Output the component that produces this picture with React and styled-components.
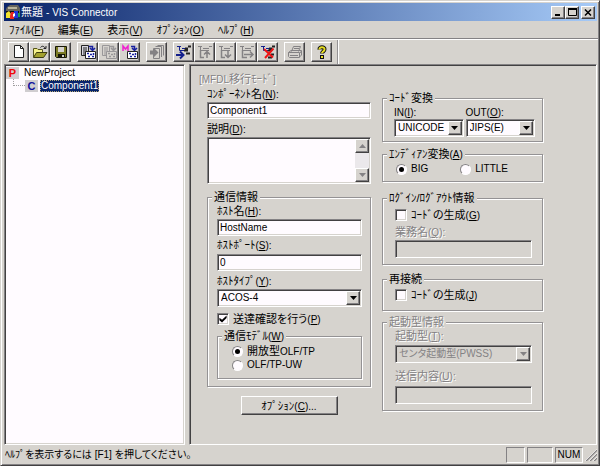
import React from "react";
import styled, { createGlobalStyle, css } from "styled-components";

const face = "#d6d3ce";
const paper = "#fffbff";
const shade = "#848284";
const dark = "#424142";
const navy = "#08246b";

const sunken = css`
  border: 1px solid;
  border-color: ${shade} #fff #fff ${shade};
  box-shadow: inset 1px 1px ${dark}, inset -1px -1px ${face};
`;

const raised = css`
  background: ${face};
  border: 1px solid;
  border-color: #fff ${dark} ${dark} #fff;
  box-shadow: inset -1px -1px ${shade};
`;

const GlobalStyle = createGlobalStyle`
  * { box-sizing: border-box; }
  body { margin: 0; background: ${face}; }
  body, button, input, select, textarea {
    font-family: "Liberation Sans", "Noto Sans CJK JP", sans-serif;
    font-size: 11px;
    line-height: 14px;
    color: #000;
  }
  body { font-feature-settings: "palt"; }
`;

const Window = styled.div`
  min-height: 100vh;
  display: flex;
  flex-direction: column;
  background: ${face};
  padding: 1px 1px 2px 2px;
  border: 1px solid;
  border-color: ${face} ${dark} ${dark} ${face};
  box-shadow: inset 1px 1px #fff, inset -1px -1px ${shade};
  white-space: nowrap;
`;

const TitleBar = styled.header`
  height: 18px;
  margin: 1px 1px 0;
  padding: 0 2px 0 1px;
  display: flex;
  align-items: center;
  color: #fff;
  background: linear-gradient(to right, #0a246a, #a6caf7);
`;

const Title = styled.h1`
  margin: 0;
  flex: 1;
  font-size: 11px;
  font-weight: normal;
`;

const Latin = styled.span`
  font-size: 10px;
  line-height: 10px;
`;

const CaptionButton = styled.button`
  ${raised}
  width: 14px;
  height: 13px;
  padding: 0;
  display: grid;
  place-items: center;
  margin-left: ${(p) => (p.$apart ? "2px" : "0")};
`;

const MenuBar = styled.nav`
  height: 17px;
  display: flex;
  align-items: center;
  padding: 0 6px;
  gap: 14px;
`;

const MenuItem = styled.button`
  border: 0;
  padding: 0;
  background: none;
  font-feature-settings: "palt";
`;

const Toolbar = styled.div`
  display: flex;
  height: 26px;
  padding-top: 1px;
  border-top: 1px solid ${shade};
  box-shadow: inset 0 1px #fff;
`;

const ToolBand = styled.div`
  display: flex;
  align-items: center;
  gap: 6px;
  padding: 0 5px;
  border-right: 1px solid #949294;
  box-shadow: 1px 0 #fff;
`;

const ToolGroup = styled.div`
  display: flex;
`;

const ToolButton = styled.button`
  ${raised}
  width: 21px;
  height: 20px;
  padding: 0;
  display: grid;
  place-items: center;
`;

const Work = styled.main`
  flex: 1;
  display: flex;
  gap: 4px;
  margin-right: 1px;
`;

const Tree = styled.ul`
  ${sunken}
  flex: 0 0 181px;
  margin: 0 0 0 1px;
  padding: 1px;
  list-style: none;
  background: ${paper};
`;

const TreeItem = styled.li`
  display: flex;
  align-items: center;
  gap: 5px;
  height: 13px;
  padding-left: ${(p) => (p.$child ? "7px" : "0")};
`;

const Branch = styled.span`
  align-self: flex-start;
  width: 12px;
  height: 7px;
  margin-right: -5px;
  border: dotted #a09ea0;
  border-width: 0 0 1px 1px;
`;

const Badge = styled.span`
  width: 13px;
  height: 12px;
  background: #d0cdd0;
  color: ${(p) => p.$color};
  font: bold 11px/12px "Liberation Sans", sans-serif;
  text-align: center;
`;

const NodeName = styled.span`
  line-height: 12px;
  font-size: 10px;
  ${(p) =>
    p.$selected &&
    css`
      background: ${navy};
      color: #fff;
      outline: 1px dotted #b8a878;
      outline-offset: -1px;
      margin-left: -3px;
      padding: 0 1px;
    `}
`;

const Pane = styled.section`
  ${sunken}
  flex: 1;
  min-width: 0;
  padding: 7px 9px 4px;
`;

const Mode = styled.p`
  margin: 0 0 1px;
  color: ${shade};
  text-shadow: 1px 1px #fff;
`;

const Form = styled.form`
  display: grid;
  grid-template-columns: minmax(0, 164px) minmax(0, 161px);
  gap: 11px;
  padding-left: 8px;
`;

const Column = styled.div`
  display: flex;
  flex-direction: column;
  padding-top: ${(p) => p.$top || 0}px;
`;

const Group = styled.fieldset`
  min-width: 0;
  margin: ${(p) => p.$gap || 0}px 0 0;
  padding: 0;
  border: 1px solid #949294;
  box-shadow: inset 1px 1px #fff, 1px 1px #fff;
`;

const Legend = styled.legend`
  margin-left: 4px;
  padding: 0 2px;
  background: ${face};
  ${(p) => p.$off && `color: ${shade}; text-shadow: 1px 1px #fff;`}
`;

const GroupBody = styled.div`
  display: flex;
  flex-direction: column;
  padding: ${(p) => p.$pad};
`;

const Row = styled.div`
  display: flex;
  gap: ${(p) => p.$gap}px;
`;

const Field = styled.div`
  flex: 1;
  min-width: 0;
`;

const Label = styled.label`
  display: block;
  margin-top: ${(p) => p.$gap || 0}px;
  ${(p) => p.$off && `color: ${shade}; text-shadow: 1px 1px #fff;`}
`;

const TextBox = styled.input`
  ${sunken}
  display: block;
  width: 100%;
  height: ${(p) => p.$h || 17}px;
  margin-top: ${(p) => p.$gap || 0}px;
  padding: 0 2px;
  border-radius: 0;
  background: ${(p) => (p.disabled ? face : paper)};
  font-size: 10px;
`;

const Memo = styled.div`
  ${sunken}
  display: flex;
  height: 47px;
  margin-top: 1px;
  padding: 1px;
  background: ${paper};
`;

const MemoText = styled.textarea`
  flex: 1;
  min-width: 0;
  border: 0;
  padding: 1px;
  resize: none;
  overflow: hidden;
  background: transparent;
`;

const ScrollTrack = styled.div`
  width: 14px;
  display: flex;
  flex-direction: column;
  justify-content: space-between;
  background: #ebe8eb;
`;

const ScrollButton = styled.button`
  ${raised}
  height: 14px;
  padding: 0;
  display: grid;
  place-items: center;
`;

const Combo = styled.div`
  ${sunken}
  position: relative;
  flex: 1;
  height: 18px;
  margin-top: ${(p) => p.$gap || 0}px;
  padding: 1px;
  background: ${(p) => (p.$off ? face : paper)};
`;

const ComboSelect = styled.select`
  appearance: none;
  display: block;
  width: 100%;
  height: 14px;
  border: 0;
  padding: 0 14px 0 2px;
  background: transparent;
  font-size: 10px;
  font-feature-settings: "palt";
  color: ${(p) => (p.disabled ? shade : "#000")};
  opacity: 1;
`;

const ComboArrow = styled.span`
  ${raised}
  position: absolute;
  top: 1px;
  right: 1px;
  bottom: 1px;
  width: 14px;
  display: grid;
  place-items: center;
  pointer-events: none;
`;

const Choice = styled.label`
  display: flex;
  align-items: center;
  gap: 4px;
  height: 14px;
  margin-top: ${(p) => p.$gap || 0}px;
`;

const CheckBox = styled.input.attrs({ type: "checkbox" })`
  ${sunken}
  appearance: none;
  width: 12px;
  height: 12px;
  margin: 0;
  background: ${paper};
  display: grid;
  place-items: center;
  &:checked::before {
    content: "";
    width: 8px;
    height: 8px;
    background: #000;
    clip-path: polygon(5% 35%, 38% 60%, 95% 5%, 95% 38%, 38% 95%, 5% 65%);
  }
`;

const Radio = styled.input.attrs({ type: "radio" })`
  appearance: none;
  width: 11px;
  height: 11px;
  margin: 0;
  border: 1px solid;
  border-color: ${shade} #fff #fff ${shade};
  border-radius: 50%;
  background: ${paper};
  display: grid;
  place-items: center;
  &:checked::before {
    content: "";
    width: 5px;
    height: 5px;
    border-radius: 50%;
    background: #000;
  }
`;

const PushButton = styled.button`
  ${raised}
  align-self: center;
  width: 97px;
  height: 19px;
  margin-top: 9px;
  padding: 0;
`;

const StatusBar = styled.footer`
  display: flex;
  align-items: center;
  gap: 2px;
  height: 18px;
  padding: 1px 1px 0 2px;
`;

const StatusText = styled.span`
  flex: 1;
  font-size: 10px;
`;

const StatusCell = styled.span`
  width: ${(p) => p.$w}px;
  height: 16px;
  border: 1px solid;
  border-color: ${shade} #fff #fff ${shade};
  font-size: 10px;
  text-align: center;
`;

const Arrow = ({ up, off }) => (
  <svg width="7" height="4" viewBox="0 0 7 4" aria-hidden="true">
    <path d={up ? "M0 4L3.5 0L7 4Z" : "M0 0L3.5 4L7 0Z"} fill={off ? shade : "#000"} />
  </svg>
);

const Icon = ({ children }) => (
  <svg width="16" height="16" viewBox="0 0 16 16" fill="none" aria-hidden="true">
    {children}
  </svg>
);

const PageIcon = () => (
  <Icon>
    <path d="M3.5 1.5H9.5L12.5 4.5V13.5H3.5Z" fill="#fff" stroke="#222" />
    <path d="M9.5 1.5V4.5H12.5" stroke="#222" />
  </Icon>
);

const OpenIcon = () => (
  <Icon>
    <path d="M1.5 13V4.5H5L6 5.5H10.5V8" fill="#f5f18a" stroke="#55541c" />
    <path d="M1.5 13.5L4.5 8.5H15L11.5 13.5Z" fill="#a3a12e" stroke="#3c3b10" />
    <path d="M8.5 3.5C10 1.5 12 2 13.5 4.5M11.5 4.5H14V2" stroke="#222" />
  </Icon>
);

const SaveIcon = () => (
  <Icon>
    <path d="M2.5 2.5H13.5V13.5H3.5L2.5 12.5Z" fill="#7c7b24" stroke="#161606" />
    <path d="M5 3H11V8H5Z" fill={face} />
    <path d="M5 10H12V13H5Z" fill="#161606" />
    <path d="M9 11H11V13H9Z" fill={face} />
  </Icon>
);

const TransferIcon = ({ off, letter }) => {
  const ink = off ? "#999799" : "#222";
  const blue = off ? "#999799" : "#1820a0";
  return (
    <Icon>
      {letter ? (
        <path d="M1 7V2L3.5 5L6 2V7" stroke="#f020d0" strokeWidth="1.5" />
      ) : (
        <>
          <path d="M1.5 1.5H8.5V11.5H1.5Z" fill={off ? face : "#d8d8e0"} stroke={ink} />
          <path d="M3 4H7M3 6H7M3 8H6M3 10H5" stroke={ink} />
        </>
      )}
      <path d="M9 2.5H12.5V5M10 4L12.5 6.5L15 4" stroke={blue} strokeWidth="1.5" />
      <path d="M5.5 7.5H15.5V14.5H5.5Z" fill={off ? face : "#fff"} stroke={ink} />
      <path d="M7 9.5H9M10 10.5H12M12 12.5H14M8 12.5H10M13.5 9V11" stroke={blue} strokeWidth="1.5" />
    </Icon>
  );
};

const CopyIcon = () => (
  <Icon>
    <path d="M6.5 2.5H12.5V13M8.5 1.5H14.5V11.5M4.5 4.5H10.5V14.5H4.5Z" stroke={shade} />
    <path d="M1 6.5H5V4L9.5 8.5L5 13V10.5H1Z" fill={shade} />
  </Icon>
);

const treeArrows = {
  up: "M3.5 6V13.5H7M10 14V8M7 10.5L10 7.5L13 10.5",
  down: "M3.5 6V13.5H7M10 7V13M7 10.5L10 13.5L13 10.5",
  right: "M3.5 6V13.5H8M5 10.5H13.5M11 7.5L14 10.5L11 13.5",
};

const TreeIcon = ({ kind }) => {
  const off = kind in treeArrows;
  const c = off ? shade : "#14208c";
  return (
    <Icon>
      <path d="M1 2.5H5M3.5 3V6.5H8M6 4.5H10" stroke={c} />
      <path d="M9 4.5H12M8 6.5H12M12 2.5H15" stroke={off ? c : "#222"} strokeWidth={off ? 1 : 2} />
      {off && <path d={treeArrows[kind]} stroke={c} strokeWidth="1.5" />}
      {kind === "add" && (
        <>
          <path d="M0 11H7M4 7.5L7.5 11L4 14.5" stroke={c} strokeWidth="2" />
          <path d="M10 9.5H14" stroke="#222" strokeWidth="2" />
        </>
      )}
      {kind === "delete" && (
        <>
          <path d="M11 10.5H14M8 13.5H12" stroke="#222" strokeWidth="2" />
          <path d="M4 5L13 13.5M13.5 4.5L5 14" stroke="#ee1515" strokeWidth="2" />
        </>
      )}
    </Icon>
  );
};

const PrintIcon = () => (
  <Icon>
    <path d="M4.5 7.5L6.5 2.5H13.5L11.5 7.5M1.5 8.5L4 6.5H14.5L13.5 9M1.5 8.5H12.5V13.5H2.5L1.5 12.5ZM12.5 13L14.5 11V7" stroke={shade} />
    <path d="M7 4.5H12M6 6.5H10M3 11.5H11" stroke={shade} />
  </Icon>
);

const HelpIcon = () => (
  <Icon>
    <path d="M5.5 5.5C5 2.5 11 2.5 10.5 5.5C10.5 7.5 8 7.5 8 9.5" stroke="#111" strokeWidth="4" />
    <path d="M5.5 5.5C5 2.5 11 2.5 10.5 5.5C10.5 7.5 8 7.5 8 9.2" stroke="#e8df20" strokeWidth="2" />
    <path d="M6 11H10V15H6Z" fill="#111" />
    <path d="M7 12H9V14H7Z" fill="#e8df20" />
  </Icon>
);

const AppIcon = () => (
  <Icon>
    <path d="M2 3L5 1H13L15 4V9H1V5Z" fill="#66645c" />
    <path d="M3 3H12V5H3Z" fill="#b9b49b" />
    <path d="M1 7H14V9H1Z" fill="#111" />
    <path d="M1 9L4 7L6 10V14H1Z" fill="#f3e32d" />
    <path d="M6 8H9V15H5V12Z" fill="#e72520" />
    <path d="M9 7H13V14H9Z" fill="#1e35dc" />
    <path d="M13 9H15V13H13Z" fill="#1e9b52" />
    <path d="M8 10L10 9V12L8 13Z" fill="#fff" />
  </Icon>
);

const Grip = () => (
  <svg width="12" height="12" viewBox="0 0 12 12" aria-hidden="true">
    <path d="M1 12L12 1M5 12L12 5M9 12L12 9" stroke={shade} strokeWidth="1.5" />
    <path d="M0 12L12 0M4 12L12 4M8 12L12 8" stroke="#fff" strokeWidth="0.7" />
  </svg>
);

const Key = ({ k, end = "" }) => (
  <Latin>
    (<u>{k}</u>){end}
  </Latin>
);

const Select = ({ id, value, disabled, gap }) => (
  <Combo $off={disabled} $gap={gap}>
    <ComboSelect id={id} disabled={disabled}>
      <option>{value}</option>
    </ComboSelect>
    <ComboArrow>
      <Arrow off={disabled} />
    </ComboArrow>
  </Combo>
);

const menus = [
  ["ﾌｧｲﾙ", "F"],
  ["編集", "E"],
  ["表示", "V"],
  ["ｵﾌﾟｼｮﾝ", "O"],
  ["ﾍﾙﾌﾟ", "H"],
];

const tools = [
  [["New", <PageIcon />], ["Open", <OpenIcon />], ["Save", <SaveIcon />]],
  [["Send", <TransferIcon />], ["Receive", <TransferIcon off />], ["MFDL", <TransferIcon letter />]],
  [["Copy", <CopyIcon />]],
  ["add", "up", "down", "right", "delete"].map((kind) => [kind, <TreeIcon kind={kind} />]),
  [["Print", <PrintIcon />]],
  [["Help", <HelpIcon />]],
];

export default function App() {
  return (
    <Window lang="ja">
      <GlobalStyle />
      <TitleBar>
        <AppIcon />
        <Title>無題 <Latin>- VIS Connector</Latin></Title>
        <CaptionButton aria-label="Minimize">
          <svg width="8" height="8"><path d="M1 6H6V8H1Z" /></svg>
        </CaptionButton>
        <CaptionButton aria-label="Maximize">
          <svg width="9" height="8"><path d="M.5 1H8.5V7.5H.5Z" fill="none" stroke="#000" /><path d="M0 0H9V2H0Z" /></svg>
        </CaptionButton>
        <CaptionButton aria-label="Close" $apart>
          <svg width="8" height="7"><path d="M1 .5L7 6.5M7 .5L1 6.5" stroke="#000" strokeWidth="1.5" /></svg>
        </CaptionButton>
      </TitleBar>
      <MenuBar>
        {menus.map(([name, k]) => (
          <MenuItem key={k}>{name}<Key k={k} /></MenuItem>
        ))}
      </MenuBar>
      <Toolbar>
        <ToolBand>
          {tools.map((group, i) => (
            <ToolGroup key={i}>
              {group.map(([name, icon]) => (
                <ToolButton key={name} aria-label={name}>{icon}</ToolButton>
              ))}
            </ToolGroup>
          ))}
        </ToolBand>
      </Toolbar>
      <Work>
        <Tree>
          <TreeItem>
            <Badge $color="#f00808">P</Badge>
            <NodeName>NewProject</NodeName>
          </TreeItem>
          <TreeItem $child>
            <Branch />
            <Badge $color="#10109c">C</Badge>
            <NodeName $selected>Component1</NodeName>
          </TreeItem>
        </Tree>
        <Pane>
          <Mode><Latin>[MFDL</Latin>移行ﾓｰﾄﾞ<Latin>]</Latin></Mode>
          <Form onSubmit={(e) => e.preventDefault()}>
            <Column>
              <Label htmlFor="name">ｺﾝﾎﾟｰﾈﾝﾄ名<Key k="N" end=":" /></Label>
              <TextBox id="name" $gap={1} defaultValue="Component1" />
              <Label htmlFor="memo" $gap={3}>説明<Key k="D" end=":" /></Label>
              <Memo>
                <MemoText id="memo" />
                <ScrollTrack>
                  <ScrollButton type="button" aria-label="Scroll up"><Arrow up off /></ScrollButton>
                  <ScrollButton type="button" aria-label="Scroll down"><Arrow off /></ScrollButton>
                </ScrollTrack>
              </Memo>
              <Group $gap={6}>
                <Legend>通信情報</Legend>
                <GroupBody $pad="0 8px 7px 9px">
                  <Label htmlFor="host">ﾎｽﾄ名<Key k="H" end=":" /></Label>
                  <TextBox id="host" $gap={1} defaultValue="HostName" />
                  <Label htmlFor="port" $gap={2}>ﾎｽﾄﾎﾟｰﾄ<Key k="S" end=":" /></Label>
                  <TextBox id="port" $gap={2} defaultValue="0" />
                  <Label htmlFor="type" $gap={3}>ﾎｽﾄﾀｲﾌﾟ<Key k="Y" end=":" /></Label>
                  <Row><Select id="type" value="ACOS-4" gap={1} /></Row>
                  <Choice $gap={5}><CheckBox defaultChecked /><span>送達確認を行う<Key k="P" /></span></Choice>
                  <Group $gap={3}>
                    <Legend>通信ﾓﾃﾞﾙ<Key k="W" /></Legend>
                    <GroupBody $pad="1px 0 6px 14px">
                      <Choice><Radio name="model" defaultChecked /><span>開放型<Latin>OLF/TP</Latin></span></Choice>
                      <Choice><Radio name="model" /><Latin>OLF/TP-UW</Latin></Choice>
                    </GroupBody>
                  </Group>
                </GroupBody>
              </Group>
              <PushButton type="button">ｵﾌﾟｼｮﾝ<Key k="C" end="..." /></PushButton>
            </Column>
            <Column $top={4}>
              <Group>
                <Legend>ｺｰﾄﾞ変換</Legend>
                <GroupBody $pad="0 7px 4px 11px">
                  <Row $gap={2}>
                    <Field>
                      <Label htmlFor="in"><Latin>IN</Latin><Key k="I" end=":" /></Label>
                      <Select id="in" value="UNICODE" />
                    </Field>
                    <Field>
                      <Label htmlFor="out"><Latin>OUT</Latin><Key k="O" end=":" /></Label>
                      <Select id="out" value="JIPS(E)" />
                    </Field>
                  </Row>
                </GroupBody>
              </Group>
              <Group $gap={5}>
                <Legend>ｴﾝﾃﾞｨｱﾝ変換<Key k="A" /></Legend>
                <GroupBody $pad="1px 0 5px 13px">
                  <Row $gap={32}>
                    <Choice><Radio name="endian" defaultChecked /><Latin>BIG</Latin></Choice>
                    <Choice><Radio name="endian" /><Latin>LITTLE</Latin></Choice>
                  </Row>
                </GroupBody>
              </Group>
              <Group $gap={9}>
                <Legend>ﾛｸﾞｲﾝ/ﾛｸﾞｱｳﾄ情報</Legend>
                <GroupBody $pad="3px 10px 6px 12px">
                  <Choice><CheckBox /><span>ｺｰﾄﾞの生成<Key k="G" /></span></Choice>
                  <Label htmlFor="job" $gap={3} $off>業務名<Key k="Q" end=":" /></Label>
                  <TextBox id="job" $gap={1} $h={18} disabled />
                </GroupBody>
              </Group>
              <Group $gap={7}>
                <Legend>再接続</Legend>
                <GroupBody $pad="2px 0 8px 12px">
                  <Choice><CheckBox /><span>ｺｰﾄﾞの生成<Key k="J" /></span></Choice>
                </GroupBody>
              </Group>
              <Group $gap={4}>
                <Legend $off>起動型情報</Legend>
                <GroupBody $pad="0 10px 6px 12px">
                  <Label htmlFor="boot" $off>起動型<Key k="T" end=":" /></Label>
                  <Row><Select id="boot" value="センタ起動型(PWSS)" gap={2} disabled /></Row>
                  <Label htmlFor="body" $gap={6} $off>送信内容<Key k="U" end=":" /></Label>
                  <TextBox id="body" $gap={3} $h={18} disabled />
                </GroupBody>
              </Group>
            </Column>
          </Form>
        </Pane>
      </Work>
      <StatusBar>
        <StatusText>ﾍﾙﾌﾟを表示するには [F1] を押してください。</StatusText>
        <StatusCell $w={19} />
        <StatusCell $w={26} />
        <StatusCell $w={28}>NUM</StatusCell>
        <Grip />
      </StatusBar>
    </Window>
  );
}
